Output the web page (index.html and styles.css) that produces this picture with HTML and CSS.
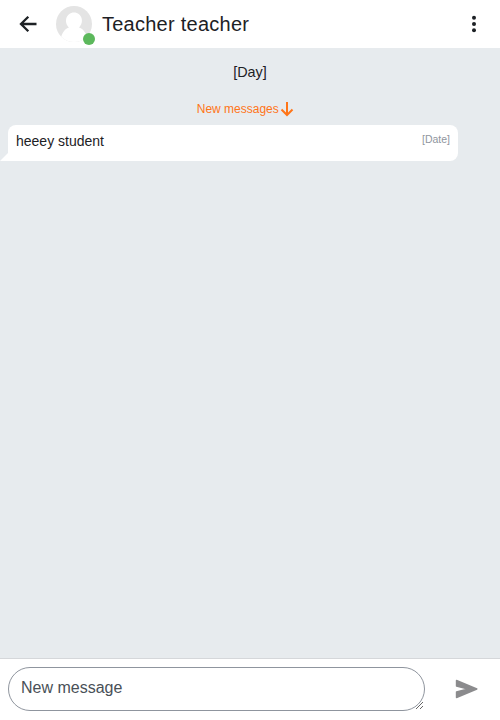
FILE: index.html
```html
<!DOCTYPE html>
<html lang="en">
<head>
<meta charset="utf-8">
<title>Teacher teacher</title>
<link rel="stylesheet" href="styles.css">
</head>
<body>
<header class="header">
  <button class="icon-button back" aria-label="Back">
    <svg width="18" height="18" viewBox="0 0 18 18"><path d="M17.500 9H2.500M9.300 1.700 2 9l7.300 7.300" fill="none" stroke="currentColor" stroke-width="2.300"/></svg>
  </button>
  <div class="avatar">
    <svg width="36" height="36" viewBox="0 0 36 36">
      <defs><clipPath id="round"><circle cx="18" cy="18" r="18"/></clipPath></defs>
      <g clip-path="url(#round)">
        <rect width="36" height="36" fill="#e4e4e4"/>
        <path d="M4 36C5 28 8 23 13 21.400 7.500 16.500 10 6.500 18 6.500S28.500 16.500 23 21.400C28 23 31 28 32 36Z" fill="#fff"/>
      </g>
    </svg>
    <span class="status"></span>
  </div>
  <h1 class="title">Teacher teacher</h1>
  <button class="icon-button more" aria-label="Menu">
    <svg width="4" height="18" viewBox="0 0 4 18"><g fill="currentColor"><circle cx="2" cy="2.700" r="2"/><circle cx="2" cy="9" r="2"/><circle cx="2" cy="15.300" r="2"/></g></svg>
  </button>
</header>
<main class="messages">
  <p class="day">[Day]</p>
  <p class="new-messages">New messages<svg width="14" height="16" viewBox="0 0 14 16"><path d="M7 1v13M1.500 8.500 7 14l5.500-5.500" fill="none" stroke="currentColor" stroke-width="2"/></svg></p>
  <div class="message">
    <span class="text">heeey student</span>
    <time class="date">[Date]</time>
    <span class="tail"></span>
  </div>
</main>
<footer class="footer">
  <textarea class="input" placeholder="New message" rows="1"></textarea>
  <button class="send" aria-label="Send">
    <svg width="23" height="20" viewBox="0 0 23 20"><path d="M1.500 1.500 21.800 10 1.500 18.500V13L13 10 1.500 7Z" fill="currentColor" stroke="currentColor" stroke-width="1.400" stroke-linejoin="round"/></svg>
  </button>
</footer>
</body>
</html>
```
FILE: styles.css
```css
* { box-sizing: border-box; }
body {
  margin: 0;
  height: 100vh;
  display: flex;
  flex-direction: column;
  overflow: hidden;
  background: #fff;
  color: #1d2125;
  font: 14px/20px "Liberation Sans", Arial, sans-serif;
}
button { border: 0; padding: 0; background: none; color: inherit; }
svg { display: block; }
.header { height: 48px; flex: none; display: flex; align-items: center; padding: 0 4px; }
.icon-button { width: 44px; height: 44px; display: flex; align-items: center; justify-content: center; }
.back { width: 48px; }
.avatar { position: relative; margin: 0 10px 0 4px; }
.status { position: absolute; left: 27px; top: 27px; width: 12px; height: 12px; border-radius: 50%; background: #5cb85c; }
.title { flex: 1; margin: 0; font-size: 20px; line-height: 24px; font-weight: 400; letter-spacing: .25px; }
.messages { flex: 1; background: #e7ebee; padding-top: 14px; }
.day { margin: 0; text-align: center; font-size: 14.4px; line-height: 20px; }
.new-messages { display: flex; justify-content: center; align-items: center; margin: 17px 9.500px 6px 0; height: 20px; gap: 1px; color: #ff7518; font-size: 12px; }
.message { position: relative; display: flex; justify-content: space-between; width: 450px; height: 36px; margin-left: 8px; padding: 6px 8px; border-radius: 8px 8px 8px 0; background: #fff; }
.date { color: #8f959e; font-size: 10.5px; line-height: 17px; }
.tail { position: absolute; left: -8px; bottom: 0; width: 8px; height: 8px; background: #fff; clip-path: polygon(100% 0, 100% 100%, 0 100%); }
.footer { height: 62px; flex: none; display: flex; align-items: center; padding: 0 22px 2px 8px; border-top: 1px solid #d5d7da; }
.input { width: 417px; height: 44px; margin: 0; padding: 10px 12px; border: 1px solid #8f959e; border-radius: 22px; outline: 0; background: #fff; font: 16px/20px "Liberation Sans", Arial, sans-serif; overflow: auto; }
.input::placeholder { color: #495057; opacity: 1; }
.send { margin-left: auto; color: #8b8b8d; }
```
